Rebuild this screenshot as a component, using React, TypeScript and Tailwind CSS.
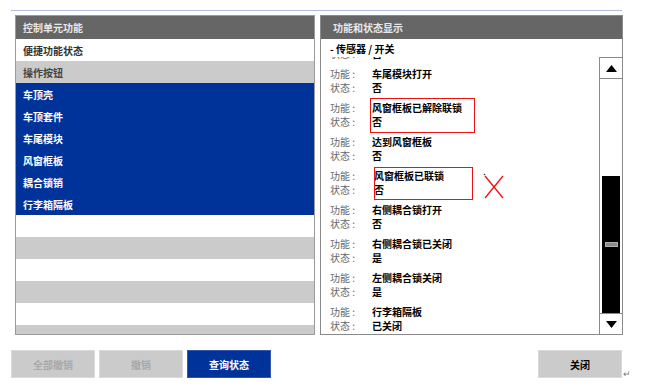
import React from "react";

const font = { fontFamily: '"Noto Sans CJK SC", "Noto Sans", sans-serif' };

const leftRows: { t: string; c: string }[] = [
  { t: "便捷功能状态", c: "bg-white text-[#333]" },
  { t: "操作按钮", c: "bg-[#cbcbcb] text-[#444]" },
  { t: "车顶壳", c: "bg-[#003399] text-white" },
  { t: "车顶套件", c: "bg-[#003399] text-white" },
  { t: "车尾模块", c: "bg-[#003399] text-white" },
  { t: "风窗框板", c: "bg-[#003399] text-white" },
  { t: "耦合锁销", c: "bg-[#003399] text-white" },
  { t: "行李箱隔板", c: "bg-[#003399] text-white" },
  { t: "", c: "bg-white" },
  { t: "", c: "bg-[#cbcbcb]" },
  { t: "", c: "bg-white" },
  { t: "", c: "bg-[#cbcbcb]" },
  { t: "", c: "bg-white" },
  { t: "", c: "bg-[#cbcbcb]" },
];

const items: { f: string; s: string; box?: string }[] = [
  { f: "车尾模块打开", s: "否" },
  { f: "风窗框板已解除联锁", s: "否", box: "a" },
  { f: "达到风窗框板", s: "否" },
  { f: "风窗框板已联锁", s: "否", box: "b" },
  { f: "右侧耦合锁打开", s: "否" },
  { f: "右侧耦合锁已关闭", s: "是" },
  { f: "左侧耦合锁关闭", s: "是" },
  { f: "行李箱隔板", s: "已关闭" },
];

export default function App() {
  return (
    <div className="w-[655px] h-[390px] bg-white relative overflow-hidden" style={font}>
      <div className="h-[10px]" />
      <div className="ml-[11px] w-[611px] h-px bg-[#b4bcdc]" />
      <div className="h-[4px]" />
      <div className="flex ml-[15px] gap-[5px] h-[320px]">
        {/* Left panel */}
        <div className="w-[300px] h-full border border-[#9a9a9a] flex flex-col overflow-hidden">
          <div className="h-[23px] shrink-0 bg-[#666666] text-[#e8e8e8] text-[10px] font-bold flex items-center pl-[7px]">
            控制单元功能
          </div>
          {leftRows.map((r, i) => (
            <div
              key={i}
              className={`h-[22px] shrink-0 flex items-center pl-[7px] text-[10px] font-bold ${r.c}`}
            >
              {r.t}
            </div>
          ))}
        </div>
        {/* Right panel */}
        <div className="w-[303px] h-full border border-[#8a8a8a] flex flex-col overflow-hidden">
          <div className="h-[23px] shrink-0 bg-[#666666] text-[#e8e8e8] text-[10px] font-bold flex items-center pl-[12px]">
            功能和状态显示
          </div>
          <div className="h-[18px] shrink-0 flex items-center pl-[9px] text-[10px] font-bold text-black">
            - 传感器 / 开关
          </div>
          <div className="flex-1 flex min-h-0">
            <div className="flex-1 overflow-hidden relative">
              <div className="h-[6px] overflow-hidden">
                <div className="mt-[-11px] h-[14px] flex items-center text-[10px]">
                  <span className="w-[51px] pl-[9px] text-[#666] shrink-0">状态 :</span>
                  <span className="font-bold text-black">否</span>
                </div>
              </div>
              {items.map((it, i) => (
                <div key={i} className="h-[34px] pt-[3px] relative">
                  <div className="h-[14px] flex items-center text-[10px]">
                    <span className="w-[51px] pl-[9px] text-[#666] shrink-0">功能 :</span>
                    <span className={`font-bold text-black ${it.box === "b" ? "ml-[2px]" : ""}`}>{it.f}</span>
                  </div>
                  <div className="h-[14px] flex items-center text-[10px]">
                    <span className="w-[51px] pl-[9px] text-[#666] shrink-0">状态 :</span>
                    <span className={`font-bold text-black ${it.box === "b" ? "ml-[2px]" : ""}`}>{it.s}</span>
                  </div>
                  {it.box === "a" && (
                    <div className="absolute left-[49px] top-[1px] w-[105px] h-[35px] border border-[#ee1111]" />
                  )}
                  {it.box === "b" && (
                    <div className="absolute left-[53px] top-[2px] w-[99px] h-[33px] border border-[#ee1111]" />
                  )}
                </div>
              ))}
            </div>
            {/* Scrollbar */}
            <div className="w-[23px] shrink-0 flex flex-col border-l border-[#8a8a8a]">
              <div className="h-[22px] shrink-0 border-t border-b border-[#8a8a8a] flex items-center justify-center">
                <svg width="11" height="7" viewBox="0 0 11 7">
                  <polygon points="5.5,0 11,7 0,7" fill="#000" />
                </svg>
              </div>
              <div className="flex-1 flex flex-col pl-[2px] pr-[2px]">
                <div className="h-[97px] shrink-0" />
                <div className="flex-1 bg-black flex flex-col items-center">
                  <div className="h-[66px] shrink-0" />
                  <div className="w-[13px] h-[5px] bg-[#8c8c8c] border border-[#b0b0b0]" />
                </div>
              </div>
              <div className="h-[21px] shrink-0 border-t border-[#8a8a8a] flex items-center justify-center">
                <svg width="11" height="7" viewBox="0 0 11 7">
                  <polygon points="0,0 11,0 5.5,7" fill="#000" />
                </svg>
              </div>
            </div>
          </div>
        </div>
      </div>
      {/* Red X annotation */}
      <svg className="absolute left-[482px] top-[172px]" width="24" height="28" viewBox="0 0 24 28">
        <line x1="3" y1="4" x2="21" y2="26" stroke="#ee1111" strokeWidth="1.3" />
        <line x1="21" y1="4" x2="3" y2="26" stroke="#ee1111" strokeWidth="1.3" />
        <circle cx="2.5" cy="2.5" r="0.8" fill="#333" />
      </svg>
      {/* Buttons */}
      <div className="flex items-end mt-[15px] ml-[11px] w-[624px]">
        <div className="w-[84px] h-[28px] bg-[#cbcbcb] border border-[#dadada] flex items-center justify-center text-[10px] font-bold text-[#a8a8a8]">
          全部撤销
        </div>
        <div className="w-[84px] h-[28px] ml-[4px] bg-[#cbcbcb] border border-[#dadada] flex items-center justify-center text-[10px] font-bold text-[#a8a8a8]">
          撤销
        </div>
        <div className="w-[84px] h-[28px] ml-[4px] bg-[#003399] border border-[#3355aa] flex items-center justify-center text-[10px] font-bold text-white">
          查询状态
        </div>
        <div className="flex-1" />
        <div className="w-[84px] h-[28px] bg-[#cbcbcb] border border-[#dadada] flex items-center justify-center text-[10px] font-bold text-black">
          关闭
        </div>
        <div className="w-[13px] text-[9px] leading-none text-[#777] pl-[1px]">↵</div>
      </div>
    </div>
  );
}
